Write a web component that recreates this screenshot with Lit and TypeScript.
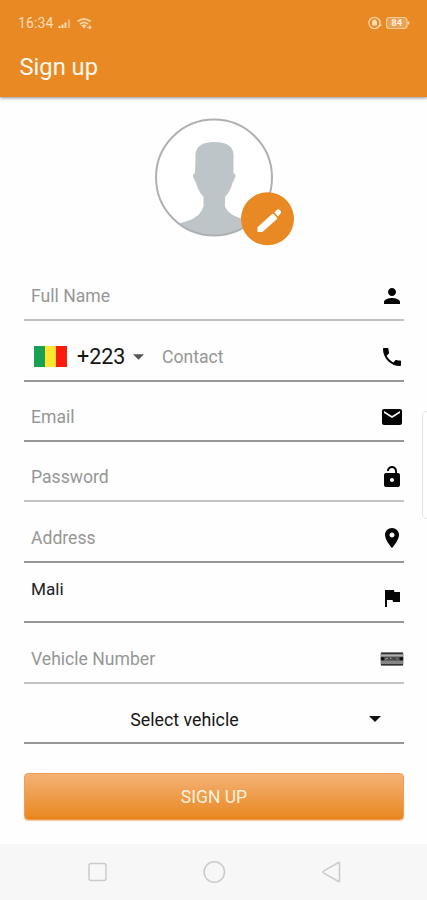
import { LitElement, html, svg, css } from "lit";
import { customElement, property } from "lit/decorators.js";
import { classMap } from "lit/directives/class-map.js";

const icons: Record<string, unknown> = {
  person: svg`<path d="M12 12c2.200 0 4-1.800 4-4s-1.800-4-4-4-4 1.800-4 4 1.800 4 4 4zm0 2c-2.700 0-8 1.300-8 4v2h16v-2c0-2.700-5.300-4-8-4z"/>`,
  phone: svg`<path d="M6.620 10.790c1.440 2.830 3.760 5.140 6.590 6.590l2.200-2.200c.27-.27.67-.36 1.020-.24 1.120.37 2.330.57 3.570.57.55 0 1 .45 1 1V20c0 .55-.45 1-1 1-9.390 0-17-7.610-17-17 0-.55.45-1 1-1h3.500c.55 0 1 .45 1 1 0 1.250.2 2.450.57 3.570.11.35.03.74-.25 1.020l-2.200 2.200z"/>`,
  mail: svg`<path d="M20 4H4c-1.100 0-2 .9-2 2v12c0 1.100.9 2 2 2h16c1.100 0 2-.9 2-2V6c0-1.100-.9-2-2-2zm0 4l-8 5-8-5V6l8 5 8-5v2z"/>`,
  lock: svg`<path d="M18 8h-1V6c0-2.760-2.240-5-5-5S7 3.240 7 6h1.900c0-1.710 1.390-3.100 3.100-3.100s3.100 1.390 3.100 3.100v2H6c-1.100 0-2 .9-2 2v10c0 1.100.9 2 2 2h12c1.100 0 2-.9 2-2V10c0-1.100-.9-2-2-2zm-6 9c-1.100 0-2-.9-2-2s.9-2 2-2 2 .9 2 2-.9 2-2 2z"/>`,
  place: svg`<path d="M12 2C8.130 2 5 5.130 5 9c0 5.250 7 13 7 13s7-7.750 7-13c0-3.870-3.130-7-7-7zm0 9.500c-1.380 0-2.500-1.120-2.500-2.500s1.120-2.500 2.500-2.500 2.500 1.120 2.500 2.500-1.120 2.500-2.500 2.500z"/>`,
  flag: svg`<path d="M14.400 6L14 4H5v17h2v-7h5.600l.4 2h7V6z"/>`,
};

interface Field {
  label: string;
  icon: string;
  light?: boolean;
}

@customElement("form-row")
class FormRow extends LitElement {
  @property() label = "";
  @property() icon = "";
  @property({ type: Boolean }) light = false;

  static styles = css`
    :host { display: block; min-height: 0; }
    .row {
      box-sizing: border-box; height: 100%; display: flex; align-items: center;
      padding: 14px 0 2px 7px; border-bottom: 2px solid #979797;
      font-size: 17.600px; color: #969696;
    }
    .row.light { border-color: #c3c3c3; }
    .label { flex: 1; }
    .label.filled { color: #222; font-size: 17.200px; padding-bottom: 18px; }
    .label.select { color: #161616; text-align: center; font-size: 17.800px; padding-right: 31px; }
    .icon { width: 24px; height: 24px; fill: #050505; display: block; }
    .plate { width: 24px; height: 14px; display: block; }
    .arrow { width: 12px; height: 6px; margin-right: 23px; display: block; }
    .code { display: flex; align-items: center; width: 131px; color: #141414; font-size: 21.500px; }
    .flag { width: 33px; height: 21px; margin: 0 10px 0 3px; display: block; }
    .caret { width: 11px; height: 6px; margin-left: 8px; display: block; }
  `;

  private trailing() {
    if (this.icon === "select")
      return html`<svg class="arrow" viewBox="0 0 12 6"><path d="M0 0h12L6 6z" fill="#111"/></svg>`;
    if (this.icon === "plate")
      return html`<svg class="plate" viewBox="0 0 24 14">
        <rect x=".5" y=".5" width="23" height="13" rx="1.500" fill="#858585"/>
        <path d="M1 1.300h22M1 12.800h22" stroke="#333" stroke-width="1.600"/>
        <path d="M1 3.500h22" stroke="#b0b0b0" stroke-width="1"/>
        <path d="M1 6.800h22" stroke="#484848" stroke-width="3.500"/>
        <circle cx="2.500" cy="6.800" r="1.800" fill="#111"/><circle cx="21.500" cy="6.800" r="1.800" fill="#111"/>
        <path d="M5 7.300l3-1M10 6.300h1.500M16.500 6.300l1.500 1" stroke="#aaa" stroke-width="1"/>
      </svg>`;
    return html`<svg class="icon" viewBox="0 0 24 24">${icons[this.icon]}</svg>`;
  }

  render() {
    return html`<div class=${classMap({ row: true, light: this.light })}>
      ${this.icon === "phone"
        ? html`<div class="code">
            <svg class="flag" viewBox="0 0 33 21">
              <path fill="#1aa052" d="M0 0h11v21H0z"/><path fill="#ffe52f" d="M11 0h11v21H11z"/><path fill="#fa1c0c" d="M22 0h11v21H22z"/>
            </svg>
            <span>+223</span>
            <svg class="caret" viewBox="0 0 12 6"><path d="M0 0h12L6 6z" fill="#555"/></svg>
          </div>`
        : null}
      <span class=${classMap({ label: true, filled: this.icon === "flag", select: this.icon === "select" })}>${this.label}</span>
      ${this.trailing()}
    </div>`;
  }
}

@customElement("app-root")
class AppRoot extends LitElement {
  static styles = css`
    :host {
      display: flex; flex-direction: column; position: relative; width: 100%; height: 900px;
      overflow: hidden; background: #fefefe; font-family: Roboto, sans-serif;
    }
    .top {
      height: 97px; flex: none; box-sizing: border-box; padding: 14px 17px 0 18px;
      background: #e88924; color: #fff; box-shadow: 0 1px 3px rgba(30, 30, 60, .5);
    }
    .status { display: flex; align-items: center; height: 18px; color: #ffdfbb; font-size: 14px; }
    .time { width: 40px; letter-spacing: .1px; }
    .left-icons { width: 36px; height: 16px; }
    .right-icons { width: 44px; height: 16px; margin-left: auto; }
    .title { margin: 21px 0 0 1.500px; font-size: 23.700px; line-height: 29px; font-weight: 400; color: #fffaf2; }
    .photo { height: 163px; flex: none; display: flex; justify-content: center; }
    .avatar { width: 160px; height: 145px; margin: 13px 0 0 22px; display: block; }
    .form {
      display: grid; grid-template-rows: 61px 61px 60px 60px 61px 60px 61px 60px;
      margin: 0 23px 0 24px; flex: none;
    }
    .submit {
      height: 47px; flex: none; margin: 29px 23px 0 24px; border: 1px solid #eda054; border-radius: 4px; box-sizing: border-box;
      background: linear-gradient(#f4b275, #e98a25 94%, #e47e12); color: #fff1df;
      font: 17.500px Roboto, sans-serif; padding: 1px 0 0; box-shadow: 0 1px 1px #f4c79a;
    }
    .nav {
      margin-top: auto; height: 56px; flex: none; background: #f7f7f7; display: flex;
      align-items: center; justify-content: space-between; padding: 0 84px 0 86px;
    }
    .nav svg { width: 24px; height: 24px; fill: none; stroke: #cbcbcb; stroke-width: 1.500; }
    .edge {
      position: absolute; right: -6px; top: 411px; width: 9px; height: 106px;
      border: 1px solid #e4e4e4; border-radius: 5px; background: #fff;
    }
  `;

  private fields: Field[] = [
    { label: "Full Name", icon: "person", light: true },
    { label: "Contact", icon: "phone" },
    { label: "Email", icon: "mail" },
    { label: "Password", icon: "lock", light: true },
    { label: "Address", icon: "place" },
    { label: "Mali", icon: "flag" },
    { label: "Vehicle Number", icon: "plate", light: true },
    { label: "Select vehicle", icon: "select" },
  ];

  render() {
    return html`
      <header class="top">
        <div class="status">
          <span class="time">16:34</span>
          <svg class="left-icons" viewBox="0 0 36 16">
            <path d="M1.500 13v-2M4.500 13v-3.500M7.500 13V7.500" stroke="#ffdfbb" stroke-width="2"/>
            <path d="M11 13V4.500" stroke="#f3b77b" stroke-width="2"/>
            <path d="M19.500 6.500q6.500-5 13 0M22 9q4-3.200 8 0" fill="none" stroke="#fbd0a2" stroke-width="1.900"/>
            <path d="M23.500 10.500q2.500-2 5 0L26 13.500z" fill="#ffdfbb"/>
            <path d="M29 12.500h4M31 10.500l2 2-2 1.500" fill="none" stroke="#fbd0a2" stroke-width="1.200"/>
          </svg>
          <svg class="right-icons" viewBox="0 0 44 16">
            <circle cx="8.500" cy="8" r="5.600" fill="none" stroke="#ffdcb5" stroke-width="1.200"/>
            <path d="M6 10.500V8q0-3.500 2.500-3.500T11 8v2.500z" fill="#ffdcb5"/><path d="M12.500 11l3-1" stroke="#ffdcb5" stroke-width="1.500"/>
            <rect x="20.500" y="2.500" width="20.500" height="11" rx="3" fill="#eca052" stroke="#fbcc9b" stroke-width="1.200"/>
            <path d="M42.500 6.500v3" stroke="#ffdcb5" stroke-width="1.500"/>
            <text x="30.800" y="11.300" text-anchor="middle" font-size="9.500" font-weight="700" fill="#fff0df">84</text>
          </svg>
        </div>
        <h1 class="title">Sign up</h1>
      </header>
      <div class="photo">
        <svg class="avatar" viewBox="0 0 160 145">
          <defs><clipPath id="disc"><circle cx="69" cy="67.500" r="58"/></clipPath></defs>
          <circle cx="69" cy="67.500" r="58" fill="#fff"/>
          <path clip-path="url(#disc)" fill="#bec5c8" d="M50.500 48C49.500 38 55 32 69.500 32S89.500 38 88.500 48l0 15q3.500 1 1 6l-2 4q-2 8-7.500 14v9q2 7 12 11 12 3.500 17 9v25H20v-21q8-5 22-9 14-4 16.500-15v-9q-5.500-6-7.500-14l-2-4q-2.500-5 1-6z"/>
          <circle cx="69" cy="67.500" r="58" fill="none" stroke="#aeb1b2" stroke-width="2"/>
          <circle cx="122.500" cy="108.800" r="26.500" fill="#e88924"/>
          <path fill="#fff" d="M112.500 122v-4.700l14.500-13.300q.8-.7 1.600.1l3.300 3.500q.7.800-.1 1.600L117.400 122zM129.300 102.500l2.600-2.700q1.400-1.200 2.800 0l.8 1q1.200 1.400 0 2.800l-2.300 2.900z"/>
        </svg>
      </div>
      <main class="form">
        ${this.fields.map((f) => html`<form-row .label=${f.label} .icon=${f.icon} .light=${!!f.light}></form-row>`)}
      </main>
      <button class="submit">SIGN UP</button>
      <nav class="nav">
        <svg viewBox="0 0 24 24"><rect x="3" y="3.500" width="17" height="17" rx="2"/></svg>
        <svg viewBox="0 0 24 24"><circle cx="11.300" cy="12" r="10.200"/></svg>
        <svg viewBox="0 0 24 24"><path d="M20.500 3v18q0 1-1 .5L4.500 12.800q-1-.8 0-1.600L19.500 2.500q1-.5 1 .5z"/></svg>
      </nav>
      <div class="edge"></div>
    `;
  }
}
